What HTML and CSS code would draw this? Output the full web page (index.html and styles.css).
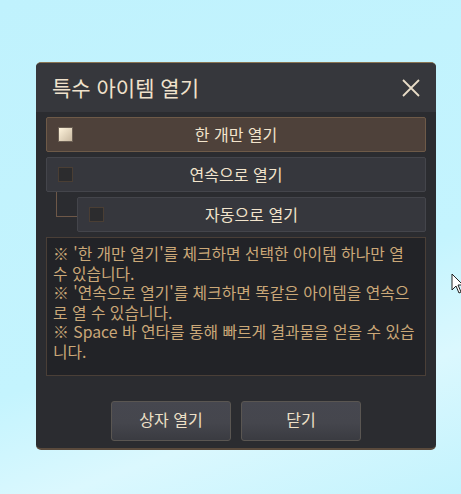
FILE: index.html
```html
<!DOCTYPE html>
<html lang="ko">
<head>
    <meta charset="UTF-8">
    <title>특수 아이템 열기</title>
    <link rel="stylesheet" href="styles.css">
</head>
<body>
    <div class="dialog">
        <div class="dialog-head">
            <div class="dialog-title">특수 아이템 열기</div>
            <svg class="close" width="18" height="18" viewBox="0 0 18 18">
                <path d="M1 1 L17 17 M17 1 L1 17" stroke="#e8dcc8" stroke-width="1.8" fill="none"/>
            </svg>
        </div>
        <div class="dialog-body">
            <div class="option selected">
                <span class="check"></span>
                <span class="option-label">한 개만 열기</span>
            </div>
            <div class="option">
                <span class="check"></span>
                <span class="option-label">연속으로 열기</span>
            </div>
            <div class="sub-row">
                <div class="branch"></div>
                <div class="option">
                    <span class="check"></span>
                    <span class="option-label">자동으로 열기</span>
                </div>
            </div>
            <div class="info">
                ※ '한 개만 열기'를 체크하면 선택한 아이템 하나만 열 수 있습니다.<br>
                ※ '연속으로 열기'를 체크하면 똑같은 아이템을 연속으로 열 수 있습니다.<br>
                ※ Space 바 연타를 통해 빠르게 결과물을 얻을 수 있습니다.
            </div>
            <div class="buttons">
                <div class="btn">상자 열기</div>
                <div class="btn">닫기</div>
            </div>
        </div>
    </div>

    <svg class="cursor" width="14" height="22" viewBox="0 0 14 22">
        <path d="M1 1 L1 17 L5 13 L8 20 L10 19 L7 12 L12 12 Z" fill="#fff" stroke="#222" stroke-width="1"/>
    </svg>
</body>
</html>
```

FILE: styles.css
```css
body, html {
    margin: 0;
    padding: 0;
    height: 100%;
}
body {
    background: linear-gradient(160deg, #c0f2fd 0%, #c4f4fe 60%, #dbf8fe 78%, #c3f3fd 100%);
    font-family: "Noto Sans CJK KR", "Noto Sans", sans-serif;
    padding-top: 62px;
    box-sizing: border-box;
    position: relative;
}
.dialog {
    width: 400px;
    height: 388px;
    margin-left: 36px;
    background: #2b2c30;
    border-top: 1px solid #8a7452;
    border-bottom: 2px solid #5a4a3c;
    border-radius: 5px;
    box-sizing: border-box;
    overflow: hidden;
}
.dialog-head {
    height: 49px;
    background: #36373c;
    display: flex;
    align-items: center;
    justify-content: space-between;
    padding: 0 16px 0 16px;
}
.dialog-title {
    color: #f0e2cc;
    font-size: 21px;
    margin-top: -2px;
}
.dialog-body {
    padding: 5px 10px 0 10px;
}
.option {
    height: 35px;
    background: #36373d;
    border: 1px solid #44454b;
    border-radius: 2px;
    box-sizing: border-box;
    display: flex;
    align-items: center;
    position: relative;
    margin-bottom: 5px;
}
.option.selected {
    background: #4e413a;
    border-color: #6e5a48;
}
.check {
    position: absolute;
    left: 11px;
    top: 9px;
    width: 15px;
    height: 15px;
    background: #2c2c2e;
    border: 1px solid #4a3e34;
    box-sizing: border-box;
}
.option.selected .check {
    background: linear-gradient(135deg, #fff4dc, #c8b8a0);
    border-color: #6c6055;
}
.option-label {
    flex: 1;
    text-align: center;
    color: #f2e4cc;
    font-size: 16px;
    margin-top: -2px;
}
.sub-row {
    display: flex;
}
.branch {
    width: 20px;
    height: 24px;
    margin-top: -5px;
    margin-left: 10px;
    border-left: 1px solid #6e5848;
    border-bottom: 1px solid #6e5848;
}
.sub-row .option {
    flex: 1;
}
.info {
    height: 139px;
    background: #222327;
    border: 1px solid #4a3f37;
    box-sizing: border-box;
    padding: 6px 8px 0 6px;
    color: #cba878;
    font-size: 15.8px;
    line-height: 19.5px;
    word-break: break-all;
}
.buttons {
    display: flex;
    justify-content: center;
    gap: 10px;
    margin-top: 25px;
}
.btn {
    width: 120px;
    height: 40px;
    box-sizing: border-box;
    background: linear-gradient(#46474f 0%, #45464d 55%, #3a3b41 100%);
    border: 1px solid #5a5652;
    border-radius: 3px;
    color: #eee0c8;
    font-size: 16px;
    display: flex;
    align-items: center;
    justify-content: center;
    padding-bottom: 4px;
}
.cursor {
    position: absolute;
    left: 451px;
    top: 273px;
}
```
